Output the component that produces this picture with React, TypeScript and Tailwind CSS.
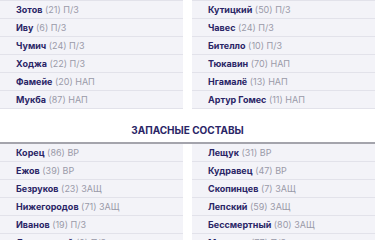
const starters: [string, string, string][][] = [
  [
    ["Зотов", "21", "П/З"],
    ["Иву", "6", "П/З"],
    ["Чумич", "24", "П/З"],
    ["Ходжа", "22", "П/З"],
    ["Фамейе", "20", "НАП"],
    ["Мукба", "87", "НАП"],
  ],
  [
    ["Кутицкий", "50", "П/З"],
    ["Чавес", "24", "П/З"],
    ["Бителло", "10", "П/З"],
    ["Тюкавин", "70", "НАП"],
    ["Нгамалё", "13", "НАП"],
    ["Артур Гомес", "11", "НАП"],
  ],
]

const subs: [string, string, string][][] = [
  [
    ["Корец", "86", "ВР"],
    ["Ежов", "39", "ВР"],
    ["Безруков", "23", "ЗАЩ"],
    ["Нижегородов", "71", "ЗАЩ"],
    ["Иванов", "19", "П/З"],
    ["Лемлянский", "9", "П/З"],
  ],
  [
    ["Лещук", "31", "ВР"],
    ["Кудравец", "47", "ВР"],
    ["Скопинцев", "7", "ЗАЩ"],
    ["Лепский", "59", "ЗАЩ"],
    ["Бессмертный", "80", "ЗАЩ"],
    ["Макаров", "77", "П/З"],
  ],
]

function PlayerList({ players, top }: { players: [string, string, string][]; top?: boolean }) {
  return (
    <ul className={top ? "border-t border-[#e2e2ea]" : ""}>
      {players.map(([name, num, pos]) => (
        <li
          key={name}
          className="h-[18px] flex items-center pl-4 bg-[#f3f3f8] border-b border-[#e2e2ea] text-[9px] leading-none whitespace-nowrap"
        >
          <span className="font-bold text-[#2a2566]">{name}</span>
          <span className="text-[#9a9aa8]">&nbsp;({num}) {pos}</span>
        </li>
      ))}
    </ul>
  )
}

export default function App() {
  return (
    <div className="w-[375px] h-[240px] overflow-hidden bg-white font-['Inter',sans-serif]">
      <div className="grid grid-cols-[183px_183px] gap-x-[9px]">
        {starters.map((col, i) => (
          <PlayerList key={i} players={col} top />
        ))}
      </div>
      <h2 className="mt-[13px] text-center text-[10px] leading-4 font-bold text-[#2a2566] uppercase">
        Запасные составы
      </h2>
      <div className="mt-[4px] border-t-2 border-[#a4a4ac]">
        <div className="grid grid-cols-[183px_183px] gap-x-[9px]">
          {subs.map((col, i) => (
            <PlayerList key={i} players={col} />
          ))}
        </div>
      </div>
    </div>
  )
}
